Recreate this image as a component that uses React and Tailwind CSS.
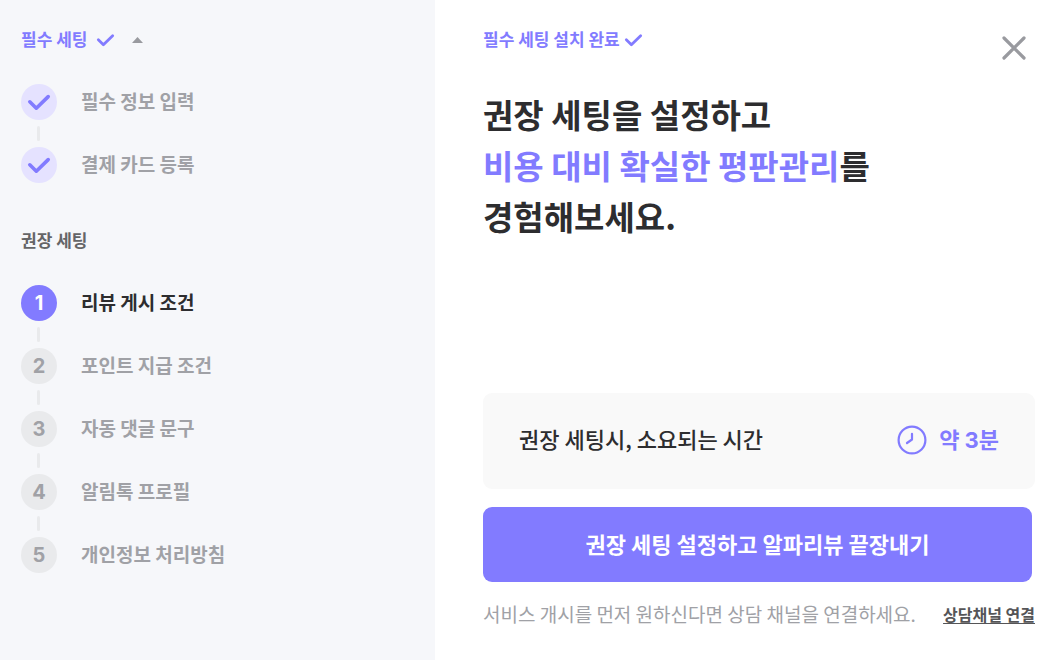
import React from "react";

const requiredSteps = ["필수 정보 입력", "결제 카드 등록"];
const recommendedSteps = [
  "리뷰 게시 조건",
  "포인트 지급 조건",
  "자동 댓글 문구",
  "알림톡 프로필",
  "개인정보 처리방침",
];

function Check({ className }) {
  return (
    <svg viewBox="0 0 24 18" className={className} fill="none" stroke="#827bff" strokeWidth="3.6" strokeLinecap="round" strokeLinejoin="round" aria-hidden="true">
      <path d="M2.8 8.8 9.3 15.2 21.2 3.6" />
    </svg>
  );
}

function Step({ label, badge, badgeClass, labelClass, last }) {
  return (
    <li>
      <div className="flex h-9 items-center gap-6">
        <span className={`flex size-9 shrink-0 items-center justify-center rounded-full font-[Inter,sans-serif] text-[20px] font-bold ${badgeClass}`}>
          {badge}
        </span>
        <span className={`pb-0.5 text-[19px] font-bold ${labelClass}`}>{label}</span>
      </div>
      {!last && <div className="my-1.5 ml-4 h-[15px] w-[3px] rounded-full bg-[#e9eaec]" />}
    </li>
  );
}

export default function App() {
  return (
    <div className="flex min-h-screen bg-white font-['Noto_Sans_CJK_KR',sans-serif] text-[#2d2d2f]">
      <aside className="w-[435px] shrink-0 bg-[#f6f7fa] px-[21px] pt-7">
        <button type="button" className="flex h-6 items-center text-[17px] leading-6 font-bold text-[#827bff]">
          <span className="pb-0.5">필수 세팅</span>
          <Check className="ml-[9px] h-[14px] w-[19px]" />
          <svg viewBox="0 0 11 6" className="ml-[17px] h-1.5 w-[11px]" fill="#999a9f" aria-hidden="true">
            <path d="M5.5 0 11 6H0Z" />
          </svg>
        </button>
        <ul className="mt-8">
          {requiredSteps.map((label, i) => (
            <Step
              key={label}
              label={label}
              badge={<Check className="h-[18px] w-6" />}
              badgeClass="bg-[#e5e2ff]"
              labelClass="text-[#a0a1a6]"
              last={i === requiredSteps.length - 1}
            />
          ))}
        </ul>
        <h2 className="mt-[45px] text-[17px] leading-6 font-bold text-[#656567]">권장 세팅</h2>
        <ol className="mt-[33px]">
          {recommendedSteps.map((label, i) => (
            <Step
              key={label}
              label={label}
              badge={i + 1}
              badgeClass={i === 0 ? "bg-[#827bff] text-white" : "bg-[#e9eaec] text-[#a0a1a6]"}
              labelClass={i === 0 ? "text-[#2d2d2f]" : "text-[#a0a1a6]"}
              last={i === recommendedSteps.length - 1}
            />
          ))}
        </ol>
      </aside>

      <main className="flex min-w-0 flex-1 flex-col pt-7 pr-[22px] pb-[33px] pl-12">
        <div className="flex items-start justify-between">
          <p className="flex h-6 items-center gap-1 text-[17px] leading-6 font-bold text-[#827bff]">
            <span className="pb-0.5">필수 세팅 설치 완료</span>
            <Check className="h-[14px] w-[19px]" />
          </p>
          <button type="button" aria-label="닫기" className="mr-px flex size-10 items-center justify-center">
            <svg viewBox="0 0 26 26" className="size-[26px]" fill="none" stroke="#999a9f" strokeWidth="3.2" strokeLinecap="round" aria-hidden="true">
              <path d="M3 3 23 23M23 3 3 23" />
            </svg>
          </button>
        </div>

        <h1 className="mt-[21px] text-[33px] leading-[51px] font-bold">
          권장 세팅을 설정하고
          <br />
          <span className="text-[#827bff]">비용 대비 확실한 평판관리</span>를
          <br />
          경험해보세요.
        </h1>

        <div className="mt-auto">
          <div className="flex h-24 items-center justify-between rounded-[9px] bg-[#f9f9f9] px-9 pb-0.5">
            <span className="pb-1 text-[22px] font-medium">권장 세팅시, 소요되는 시간</span>
            <span className="flex items-center gap-3 text-[22px] font-bold text-[#827bff]">
              <svg viewBox="0 0 30 30" className="size-[30px]" fill="none" stroke="currentColor" strokeWidth="2.2" strokeLinecap="round" strokeLinejoin="round" aria-hidden="true">
                <circle cx="15" cy="15" r="13.4" />
                <path d="M15 8.8V14.5L10 18" />
              </svg>
              <span className="pb-0.5">
                약 <span className="font-[Inter,sans-serif]">3</span>분
              </span>
            </span>
          </div>
          <div className="mt-[18px] pr-[3px]">
            <button type="button" className="h-[75px] w-full rounded-[9px] bg-[#827bff] pb-0.5 text-[22px] font-bold text-white">
              권장 세팅 설정하고 알파리뷰 끝장내기
            </button>
          </div>
          <div className="mt-[19px] flex items-center justify-between leading-[26px]">
            <p className="text-[19px] text-[#a0a1a6]">서비스 개시를 먼저 원하신다면 상담 채널을 연결하세요.</p>
            <a href="#channel" className="shrink-0 text-[16px] font-bold text-[#555557] underline underline-offset-2">
              상담채널 연결
            </a>
          </div>
        </div>
      </main>
    </div>
  );
}
